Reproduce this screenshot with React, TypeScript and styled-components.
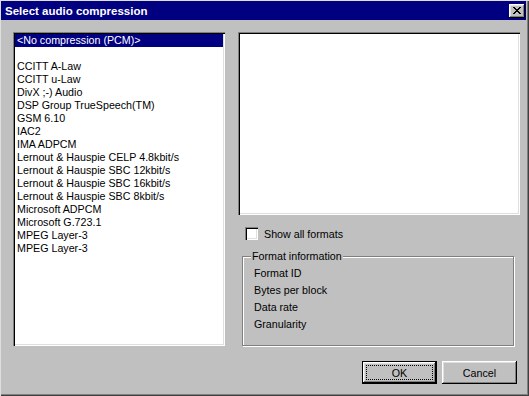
import React from 'react';
import styled, {createGlobalStyle} from 'styled-components';

const GlobalStyle = createGlobalStyle`
  html, body {
    margin: 0;
    padding: 0;
    background: #c0c0c0;
  }
  body {
    font-family: "Liberation Sans", Arial, sans-serif;
    font-size: 10.7px;
    color: #000;
  }
`;

const raised = `
  box-shadow: inset -1px -1px #000, inset 1px 1px #fff,
    inset -2px -2px #808080, inset 2px 2px #dfdfdf;
`;

const sunken = `
  box-shadow: inset 1px 1px #808080, inset 2px 2px #000,
    inset -1px -1px #fff, inset -2px -2px #dfdfdf;
`;

const Window = styled.div`
  width: 529px;
  height: 396px;
  box-sizing: border-box;
  padding: 1px 3px 0 1px;
  display: flex;
  flex-direction: column;
  background: #c0c0c0;
  box-shadow: inset 1px 1px #dfdfdf, inset -1px -1px #404040, inset -2px -2px #808080;
`;

const TitleBar = styled.div`
  height: 19px;
  flex: none;
  display: flex;
  align-items: center;
  justify-content: space-between;
  padding: 0 1px 0 4px;
  background: #000080;
`;

const Title = styled.span`
  color: #fff;
  font-weight: bold;
  font-size: 11.5px;
`;

const CloseButton = styled.button`
  width: 16px;
  height: 14px;
  padding: 0;
  border: none;
  display: flex;
  align-items: center;
  justify-content: center;
  background: #c0c0c0;
  ${raised}
`;

const Content = styled.div`
  padding: 12px 6px 0 12px;
  display: flex;
  flex-direction: column;
`;

const MainRow = styled.div`
  display: flex;
  gap: 13px;
`;

const List = styled.div`
  width: 212px;
  height: 314px;
  box-sizing: border-box;
  padding: 2px;
  background: #fff;
  ${sunken}
`;

const Item = styled.div<{ $selected?: boolean }>`
  height: 13px;
  line-height: 13px;
  padding-left: 2px;
  white-space: nowrap;
  background: ${p => (p.$selected ? '#000080' : 'transparent')};
  color: ${p => (p.$selected ? '#fff' : '#000')};
`;

const RightColumn = styled.div`
  width: 282px;
  display: flex;
  flex-direction: column;
`;

const Preview = styled.div`
  height: 183px;
  background: #fff;
  ${sunken}
`;

const CheckRow = styled.label`
  margin-top: 12px;
  padding-left: 7px;
  height: 13px;
  display: flex;
  align-items: center;
  gap: 6px;
`;

const CheckBox = styled.span`
  width: 13px;
  height: 13px;
  box-sizing: border-box;
  background: #fff;
  ${sunken}
`;

const GroupBox = styled.fieldset`
  margin: 10px 0 0 4px;
  width: 272px;
  height: 96px;
  box-sizing: border-box;
  padding: 2px 0 0 8px;
  border: 1px solid #808080;
  box-shadow: inset 1px 1px #fff, 1px 1px #fff;
`;

const Legend = styled.legend`
  padding: 0 1px;
  line-height: 13px;
  background: #c0c0c0;
`;

const InfoLine = styled.div`
  margin-left: 3px;
  height: 17px;
  line-height: 17px;
`;

const ButtonRow = styled.div`
  margin-top: 15px;
  padding-right: 3px;
  display: flex;
  justify-content: flex-end;
  gap: 5px;
`;

const Button = styled.button<{ $default?: boolean }>`
  width: 75px;
  height: 23px;
  box-sizing: border-box;
  padding: ${p => (p.$default ? '3px' : '0')};
  display: flex;
  align-items: stretch;
  font-family: inherit;
  font-size: 10.7px;
  color: #000;
  background: #c0c0c0;
  border: ${p => (p.$default ? '1px solid #000' : 'none')};
  ${raised}
`;

const ButtonLabel = styled.span<{ $focused?: boolean }>`
  flex: 1;
  display: flex;
  align-items: center;
  justify-content: center;
  border: ${p => (p.$focused ? '1px dotted #000' : 'none')};
`;

const codecs = [
    'CCITT A-Law',
    'CCITT u-Law',
    'DivX ;-) Audio',
    'DSP Group TrueSpeech(TM)',
    'GSM 6.10',
    'IAC2',
    'IMA ADPCM',
    'Lernout & Hauspie CELP 4.8kbit/s',
    'Lernout & Hauspie SBC 12kbit/s',
    'Lernout & Hauspie SBC 16kbit/s',
    'Lernout & Hauspie SBC 8kbit/s',
    'Microsoft ADPCM',
    'Microsoft G.723.1',
    'MPEG Layer-3',
    'MPEG Layer-3',
];

const info = ['Format ID', 'Bytes per block', 'Data rate', 'Granularity'];

function App() {
    return (
        <>
            <GlobalStyle />
            <Window>
                <TitleBar>
                    <Title>Select audio compression</Title>
                    <CloseButton>
                        <svg width="8" height="7" viewBox="0 0 8 7" shapeRendering="crispEdges">
                            <path
                                d="M0 0h2v1h1v1h2v-1h1v-1h2v1h-1v1h-1v1h-1v1h1v1h1v1h1v1h-2v-1h-1v-1h-2v1h-1v1h-2v-1h1v-1h1v-1h1v-1h-1v-1h-1v-1h-1z"
                                fill="#000"
                            />
                        </svg>
                    </CloseButton>
                </TitleBar>
                <Content>
                    <MainRow>
                        <List>
                            <Item $selected>{'<No compression (PCM)>'}</Item>
                            <Item>{'\u00a0'}</Item>
                            {codecs.map((c, i) => (
                                <Item key={i}>{c}</Item>
                            ))}
                        </List>
                        <RightColumn>
                            <Preview />
                            <CheckRow>
                                <CheckBox />
                                Show all formats
                            </CheckRow>
                            <GroupBox>
                                <Legend>Format information</Legend>
                                {info.map(line => (
                                    <InfoLine key={line}>{line}</InfoLine>
                                ))}
                            </GroupBox>
                        </RightColumn>
                    </MainRow>
                    <ButtonRow>
                        <Button $default>
                            <ButtonLabel $focused>OK</ButtonLabel>
                        </Button>
                        <Button>
                            <ButtonLabel>Cancel</ButtonLabel>
                        </Button>
                    </ButtonRow>
                </Content>
            </Window>
        </>
    );
}

export default App;
